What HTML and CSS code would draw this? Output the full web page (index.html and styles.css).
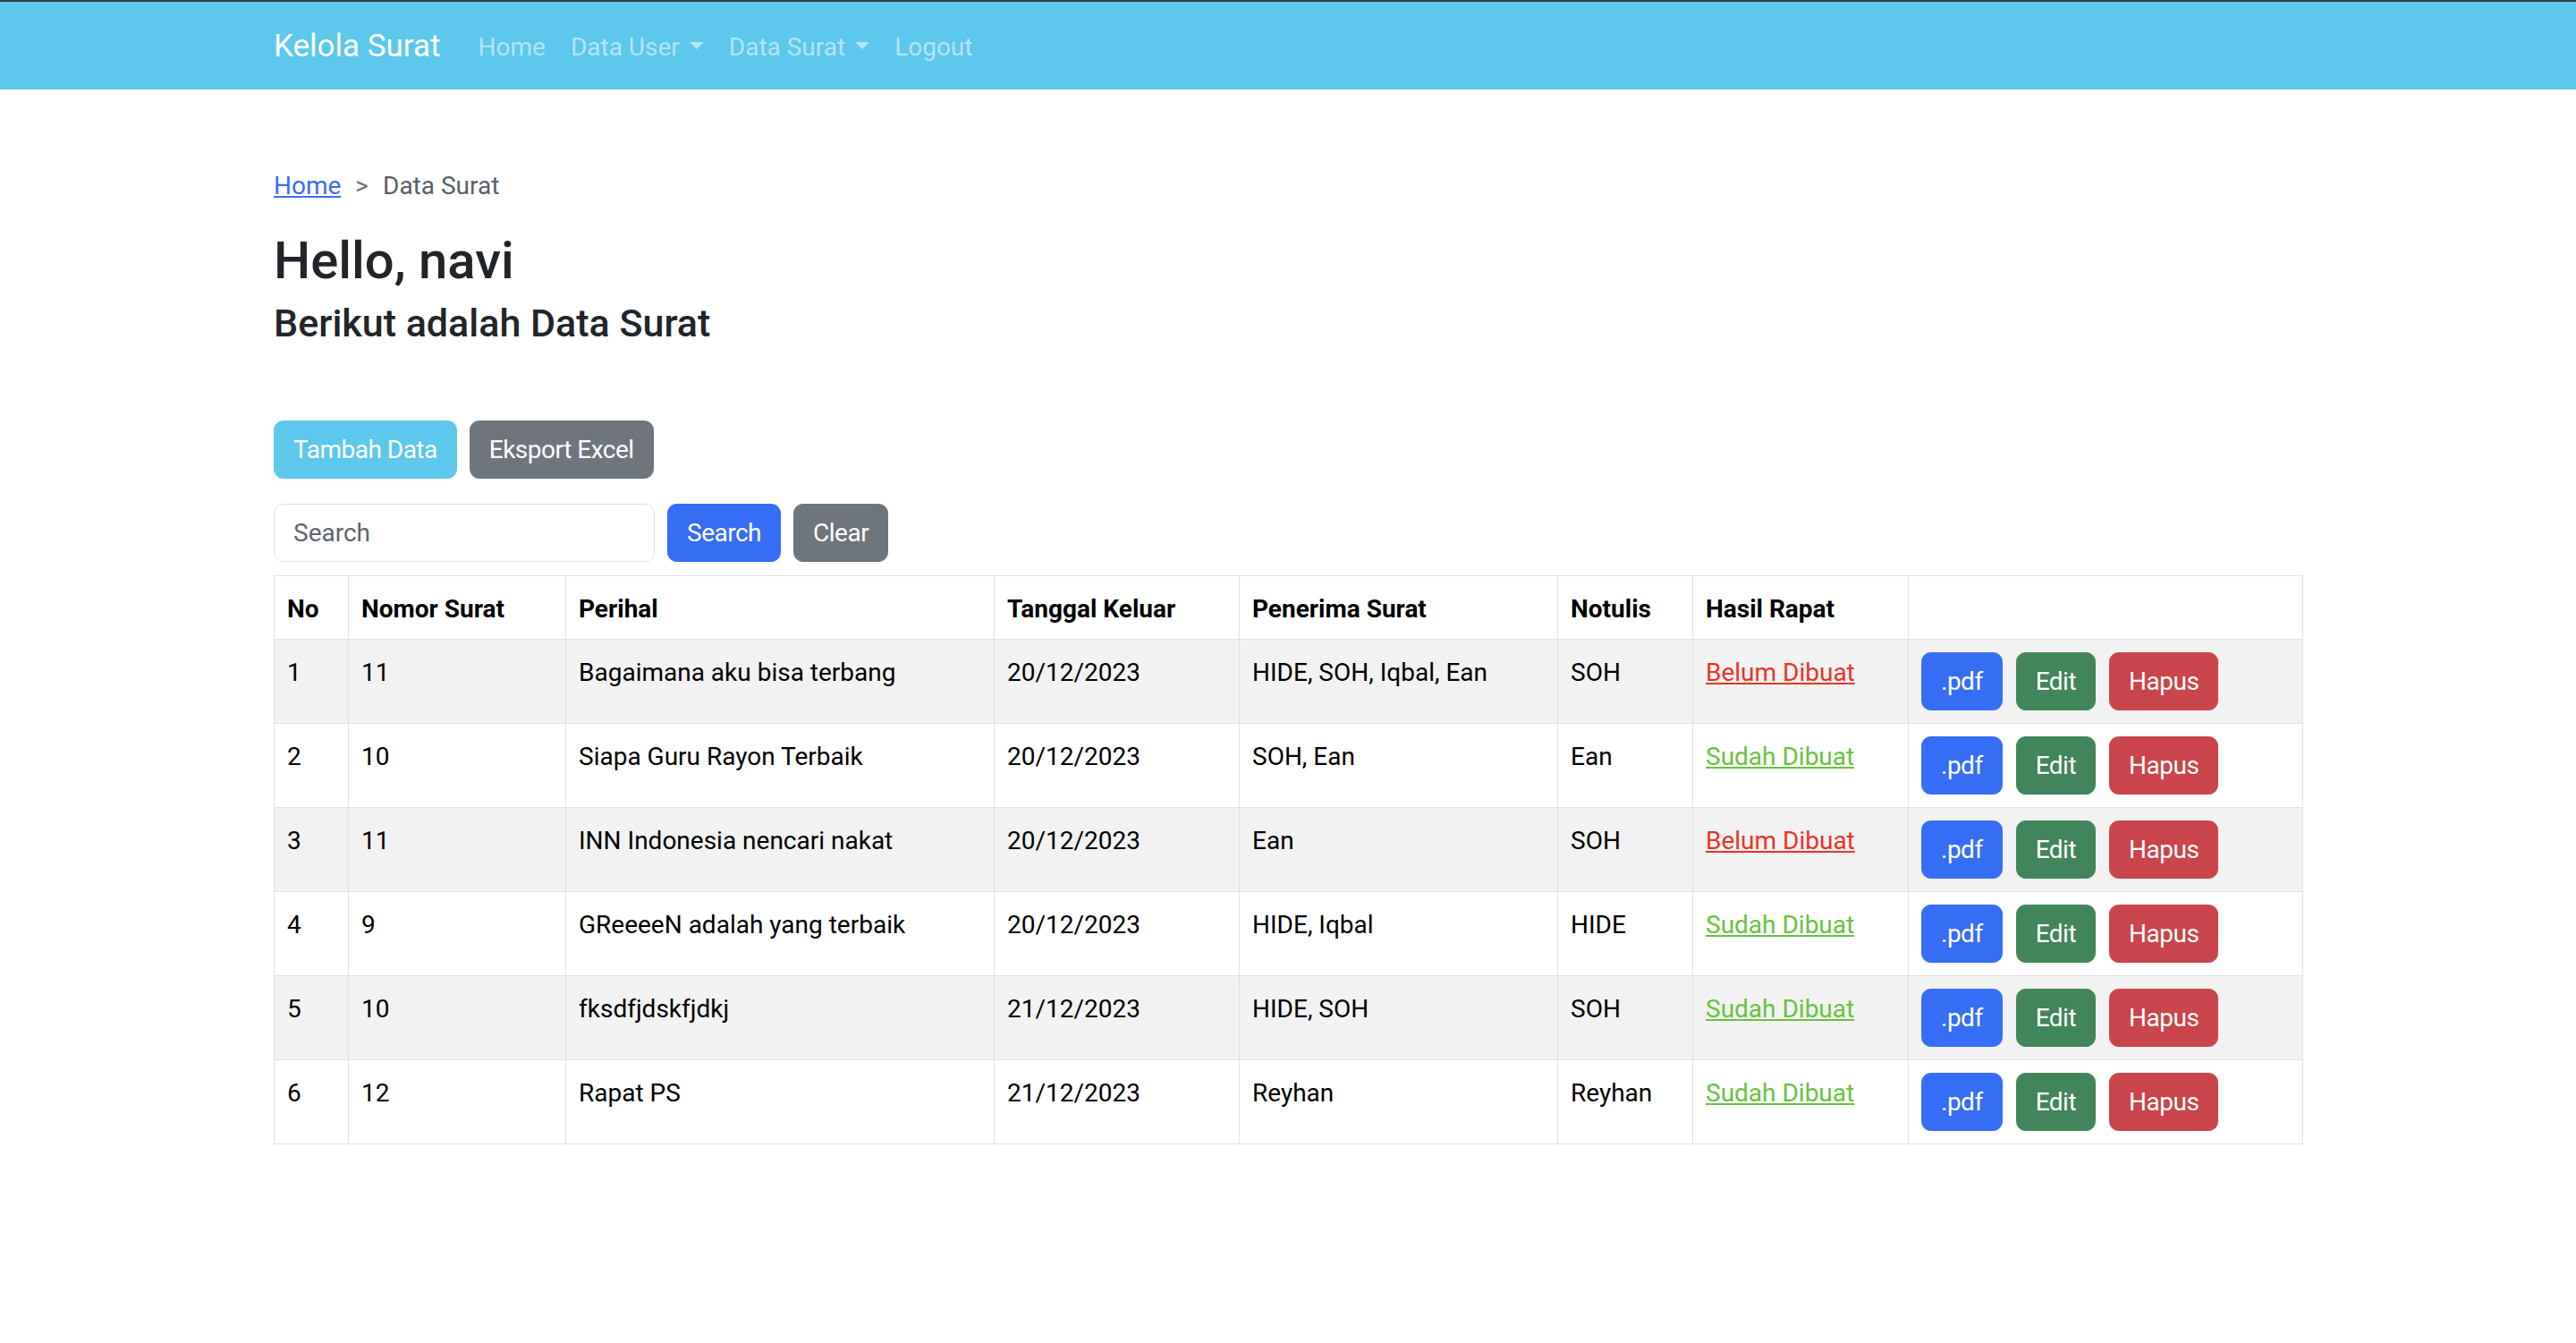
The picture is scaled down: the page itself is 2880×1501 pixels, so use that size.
FILE: index.html
```html
<!DOCTYPE html>
<html lang="id">
<head>
<meta charset="utf-8">
<title>Kelola Surat - Data Surat</title>
<link rel="stylesheet" href="styles.css">
</head>
<body>
<div class="topline"></div>
<nav class="navbar">
  <div class="navbar-inner">
    <a class="brand" href="#">Kelola Surat</a>
    <ul class="nav-list">
      <li><a class="nav-link" href="#">Home</a></li>
      <li><a class="nav-link" href="#">Data User<span class="caret"></span></a></li>
      <li><a class="nav-link" href="#">Data Surat<span class="caret"></span></a></li>
      <li><a class="nav-link" href="#">Logout</a></li>
    </ul>
  </div>
</nav>

<main class="container">
  <ol class="breadcrumb">
    <li><a class="crumb-link" href="#">Home</a></li>
    <li class="crumb-sep">&gt;</li>
    <li class="crumb-active">Data Surat</li>
  </ol>

  <h1 class="greeting">Hello, navi</h1>
  <h2 class="subtitle">Berikut adalah Data Surat</h2>

  <div class="toolbar">
    <a class="btn btn-info" href="#">Tambah Data</a>
    <a class="btn btn-secondary" href="#">Eksport Excel</a>
  </div>

  <form class="search-form">
    <input class="search-input" type="text" placeholder="Search">
    <button class="btn btn-primary" type="button">Search</button>
    <button class="btn btn-secondary" type="button">Clear</button>
  </form>

  <table class="data-table">
    <colgroup>
      <col class="c-no">
      <col class="c-nomor">
      <col class="c-perihal">
      <col class="c-tanggal">
      <col class="c-penerima">
      <col class="c-notulis">
      <col class="c-hasil">
      <col class="c-aksi">
    </colgroup>
    <thead>
      <tr>
        <th>No</th>
        <th>Nomor Surat</th>
        <th>Perihal</th>
        <th>Tanggal Keluar</th>
        <th>Penerima Surat</th>
        <th>Notulis</th>
        <th>Hasil Rapat</th>
        <th></th>
      </tr>
    </thead>
    <tbody>
      <tr>
        <td>1</td><td>11</td><td>Bagaimana aku bisa terbang</td><td>20/12/2023</td>
        <td>HIDE, SOH, Iqbal, Ean</td><td>SOH</td>
        <td><a class="status status-pending" href="#">Belum Dibuat</a></td>
        <td><div class="row-actions"><a class="btn btn-primary" href="#">.pdf</a><a class="btn btn-success" href="#">Edit</a><a class="btn btn-danger" href="#">Hapus</a></div></td>
      </tr>
      <tr>
        <td>2</td><td>10</td><td>Siapa Guru Rayon Terbaik</td><td>20/12/2023</td>
        <td>SOH, Ean</td><td>Ean</td>
        <td><a class="status status-done" href="#">Sudah Dibuat</a></td>
        <td><div class="row-actions"><a class="btn btn-primary" href="#">.pdf</a><a class="btn btn-success" href="#">Edit</a><a class="btn btn-danger" href="#">Hapus</a></div></td>
      </tr>
      <tr>
        <td>3</td><td>11</td><td>INN Indonesia nencari nakat</td><td>20/12/2023</td>
        <td>Ean</td><td>SOH</td>
        <td><a class="status status-pending" href="#">Belum Dibuat</a></td>
        <td><div class="row-actions"><a class="btn btn-primary" href="#">.pdf</a><a class="btn btn-success" href="#">Edit</a><a class="btn btn-danger" href="#">Hapus</a></div></td>
      </tr>
      <tr>
        <td>4</td><td>9</td><td>GReeeeN adalah yang terbaik</td><td>20/12/2023</td>
        <td>HIDE, Iqbal</td><td>HIDE</td>
        <td><a class="status status-done" href="#">Sudah Dibuat</a></td>
        <td><div class="row-actions"><a class="btn btn-primary" href="#">.pdf</a><a class="btn btn-success" href="#">Edit</a><a class="btn btn-danger" href="#">Hapus</a></div></td>
      </tr>
      <tr>
        <td>5</td><td>10</td><td>fksdfjdskfjdkj</td><td>21/12/2023</td>
        <td>HIDE, SOH</td><td>SOH</td>
        <td><a class="status status-done" href="#">Sudah Dibuat</a></td>
        <td><div class="row-actions"><a class="btn btn-primary" href="#">.pdf</a><a class="btn btn-success" href="#">Edit</a><a class="btn btn-danger" href="#">Hapus</a></div></td>
      </tr>
      <tr>
        <td>6</td><td>12</td><td>Rapat PS</td><td>21/12/2023</td>
        <td>Reyhan</td><td>Reyhan</td>
        <td><a class="status status-done" href="#">Sudah Dibuat</a></td>
        <td><div class="row-actions"><a class="btn btn-primary" href="#">.pdf</a><a class="btn btn-success" href="#">Edit</a><a class="btn btn-danger" href="#">Hapus</a></div></td>
      </tr>
    </tbody>
  </table>
</main>
</body>
</html>
```

FILE: styles.css
```css
* {
  box-sizing: border-box;
}

body {
  margin: 0;
  font-family: Roboto, "Liberation Sans", sans-serif;
  font-size: 28px;
  line-height: 1.5;
  color: #212529;
  background: #fff;
}

.topline {
  height: 2px;
  background: #3a3a3a;
}

/* Navbar */
.navbar {
  background: #5dc7ec;
  padding: 14px 0;
}

.navbar-inner {
  width: 2268px;
  margin: 0 auto;
  display: flex;
  align-items: center;
}

.brand {
  font-size: 35px;
  line-height: 1.5;
  padding: 7px 0 4px;
  margin-right: 28px;
  color: #fff;
  text-decoration: none;
}

.nav-list {
  display: flex;
  list-style: none;
  margin: 0;
  padding: 0;
}

.nav-link {
  display: block;
  padding: 16px 14px 12px;
  color: rgba(255, 255, 255, 0.55);
  text-decoration: none;
}

.caret {
  display: inline-block;
  margin-left: 11px;
  vertical-align: 7px;
  border-top: 8.4px solid;
  border-left: 8.4px solid transparent;
  border-right: 8.4px solid transparent;
}

/* Content */
.container {
  width: 2268px;
  margin: 0 auto;
  padding-top: 87px;
}

.breadcrumb {
  display: flex;
  list-style: none;
  margin: 0 0 28px;
  padding: 0;
}

.crumb-link {
  color: #3b6cf5;
  text-decoration: underline;
}

.crumb-sep {
  padding: 0 16px;
  color: #6c757d;
}

.crumb-active {
  color: #595f66;
}

.greeting {
  font-size: 58px;
  font-weight: 500;
  line-height: 1.2;
  margin: 0 0 9px;
}

.subtitle {
  font-size: 43px;
  font-weight: 500;
  line-height: 1.2;
  margin: 0;
}

.toolbar {
  display: flex;
  gap: 14px;
  margin-top: 83px;
}

.btn {
  display: inline-block;
  font-family: inherit;
  font-size: 28px;
  line-height: 42px;
  letter-spacing: -0.5px;
  padding: 10.5px 21px;
  border: 1px solid transparent;
  border-radius: 10.5px;
  color: #fff;
  text-decoration: none;
  cursor: pointer;
}

.btn-info {
  background: #5dc7ec;
  border-color: #5dc7ec;
}

.btn-secondary {
  background: #6e757d;
  border-color: #6e757d;
}

.btn-primary {
  background: #356ef5;
  border-color: #356ef5;
}

.btn-success {
  background: #41855a;
  border-color: #41855a;
}

.btn-danger {
  background: #c9454b;
  border-color: #c9454b;
}

.search-form {
  display: flex;
  gap: 14px;
  margin: 28px 0 15px;
}

.search-input {
  width: 426px;
  height: 65px;
  padding: 10.5px 21px;
  font-family: inherit;
  font-size: 28px;
  color: #212529;
  border: 1px solid #dee2e6;
  border-radius: 10.5px;
  outline: none;
}

.search-input::placeholder {
  color: #5f656c;
}

/* Table */
.data-table {
  width: 100%;
  border-collapse: collapse;
  table-layout: fixed;
}

.c-no { width: 83px; }
.c-nomor { width: 243px; }
.c-perihal { width: 479px; }
.c-tanggal { width: 274px; }
.c-penerima { width: 356px; }
.c-notulis { width: 151px; }
.c-hasil { width: 241px; }
.c-aksi { width: 441px; }

.data-table th,
.data-table td {
  padding: 16px 14px 12px;
  border: 1px solid #dee2e6;
  text-align: left;
  vertical-align: top;
  color: #000;
}

.data-table th {
  font-weight: 700;
  background: #fff;
}

.data-table tbody tr:nth-child(odd) td {
  background: #f2f2f2;
}

.row-actions {
  display: flex;
  gap: 15px;
  margin: -2px 0 2px;
}

.status {
  text-decoration: underline;
}

.status-pending {
  color: #e83425;
}

.status-done {
  color: #67c23f;
}
```
